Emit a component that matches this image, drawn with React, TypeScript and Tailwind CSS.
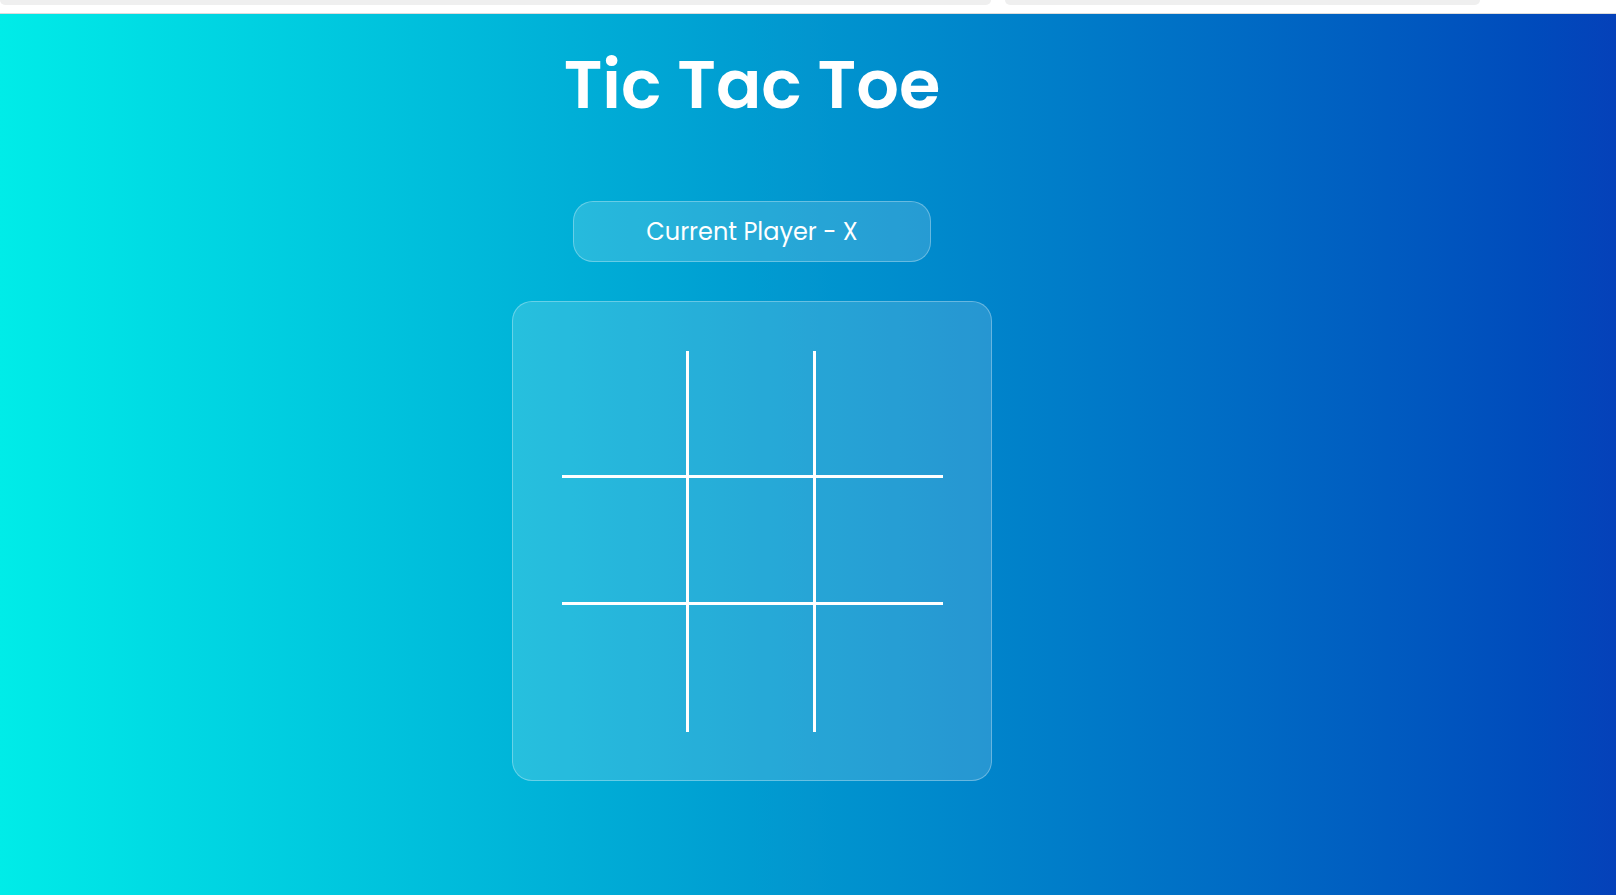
import React, { useState } from "react";

const Cell: React.FC<{ i: number; value: string; onClick: () => void }> = ({ i, value, onClick }) => {
  const col = i % 3;
  const row = Math.floor(i / 3);
  return (
    <button
      onClick={onClick}
      className={
        "w-[127px] h-[127px] flex items-center justify-center text-white text-6xl " +
        (col < 2 ? "border-r-[3px] border-r-white " : "") +
        (row < 2 ? "border-b-[3px] border-b-white" : "")
      }
    >
      {value}
    </button>
  );
};

export default function App() {
  const [cells, setCells] = useState<string[]>(Array(9).fill(""));
  const [player, setPlayer] = useState("X");

  const play = (i: number) => {
    if (cells[i]) return;
    const next = [...cells];
    next[i] = player;
    setCells(next);
    setPlayer(player === "X" ? "O" : "X");
  };

  return (
    <div className="min-h-screen flex flex-col font-['Poppins','Inter',sans-serif]">
      <div className="h-[14px] bg-white border-b border-[#dcdcdc] flex gap-[14px] items-start">
        <div className="w-[991px] h-[5px] bg-[#efefef] rounded-b-md"></div>
        <div className="w-[475px] h-[5px] bg-[#efefef] rounded-b-md"></div>
      </div>
      <main className="flex-1 h-[881px] bg-gradient-to-r from-[#00ece8] via-[#0296cf] to-[#0541b9]">
        <div className="w-[1504px] flex flex-col items-center">
          <h1 className="mt-[37px] text-[67px] leading-none font-semibold text-white">Tic Tac Toe</h1>
          <div className="mt-[83px] w-[358px] h-[61px] rounded-[20px] bg-white/15 border border-white/30 flex items-center justify-center text-white text-[24px]">
            Current Player - {player}
          </div>
          <div className="mt-[39px] w-[480px] h-[480px] rounded-[20px] bg-white/15 border border-white/30 flex items-center justify-center">
            <div className="grid grid-cols-3">
              {cells.map((v, i) => (
                <Cell key={i} i={i} value={v} onClick={() => play(i)} />
              ))}
            </div>
          </div>
        </div>
      </main>
    </div>
  );
}
